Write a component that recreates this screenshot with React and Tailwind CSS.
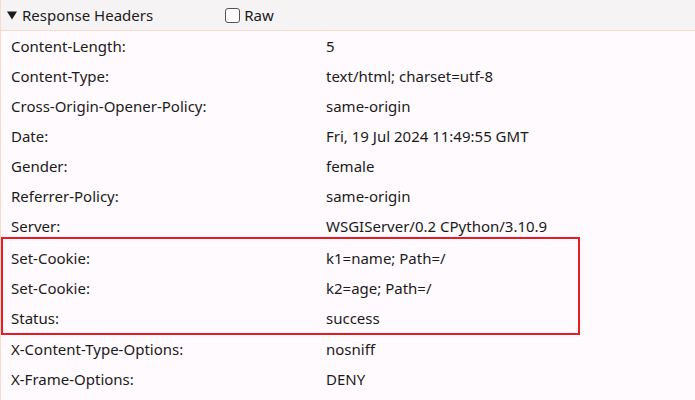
import React from 'react'

const rows = [
  ['Content-Length:', '5'],
  ['Content-Type:', 'text/html; charset=utf-8'],
  ['Cross-Origin-Opener-Policy:', 'same-origin'],
  ['Date:', 'Fri, 19 Jul 2024 11:49:55 GMT'],
  ['Gender:', 'female'],
  ['Referrer-Policy:', 'same-origin'],
  ['Server:', 'WSGIServer/0.2 CPython/3.10.9'],
]

const marked = [
  ['Set-Cookie:', 'k1=name; Path=/'],
  ['Set-Cookie:', 'k2=age; Path=/'],
  ['Status:', 'success'],
]

const tail = [
  ['X-Content-Type-Options:', 'nosniff'],
  ['X-Frame-Options:', 'DENY'],
]

function Row({ k, v }) {
  return (
    <div className="flex h-[30px] items-center">
      <div className="w-[325px] pl-[10px]">{k}</div>
      <div>{v}</div>
    </div>
  )
}

export default function App() {
  return (
    <div className="w-[695px] h-[400px] overflow-hidden bg-[#fffafd] border-l border-[#f8dccb] text-[15px] text-[#1b1b1b]"
      style={{ fontFamily: '"Noto Sans", sans-serif' }}>
      <div className="flex items-center h-[31px] bg-[#f6f3f5] border-b border-[#f3ddcf]">
        <svg width="10" height="9" viewBox="0 0 10 9" className="ml-[6px]">
          <path d="M0 0.5 H10 L5 8.5 Z" fill="#1b1b1b" />
        </svg>
        <span className="ml-[5px]">Response Headers</span>
        <span className="ml-[72px] w-[15px] h-[15px] rounded-[3px] border border-[#555] bg-white" />
        <span className="ml-[4px]">Raw</span>
      </div>
      <div>
        {rows.map(([k, v], i) => <Row key={i} k={k} v={v} />)}
        <div className="w-[579px] border-2 border-[#e81c24] -mt-[4px] -mb-px pt-[4px]">
          {marked.map(([k, v], i) => (
            <div key={i} className="flex h-[30px] items-center">
              <div className="w-[323px] pl-[8px]">{k}</div>
              <div>{v}</div>
            </div>
          ))}
        </div>
        {tail.map(([k, v], i) => <Row key={i} k={k} v={v} />)}
      </div>
    </div>
  )
}
